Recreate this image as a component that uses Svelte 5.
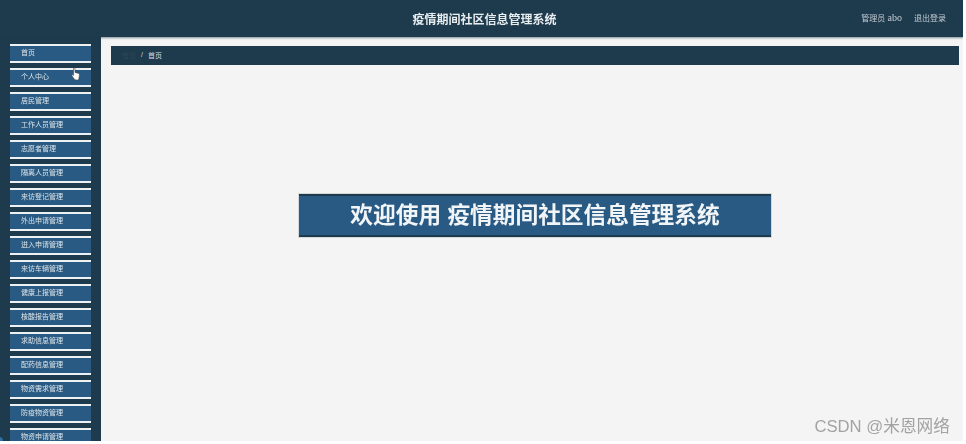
<script>
  const menu = [
    '首页', '个人中心', '居民管理', '工作人员管理', '志愿者管理', '隔离人员管理',
    '来访登记管理', '外出申请管理', '进入申请管理', '来访车辆管理', '健康上报管理',
    '核酸报告管理', '求助信息管理', '配药信息管理', '物资需求管理', '防疫物资管理', '物资申请管理'
  ];
</script>

<div class="page">
  <header class="topbar">
    <h1>疫情期间社区信息管理系统</h1>
    <div class="user">
      <span>管理员 <span class="name">abo</span></span>
      <span>退出登录</span>
    </div>
  </header>
  <div class="body">
    <nav class="sidebar">
      {#each menu as item}
        <div class="item">{item}</div>
      {/each}
    </nav>
    <main class="content">
      <div class="crumb">
        <span class="home">首页</span>
        <span class="sep">/</span>
        <span>首页</span>
      </div>
      <div class="center">
        <div class="welcome">欢迎使用 疫情期间社区信息管理系统</div>
      </div>
    </main>
  </div>
  <svg class="cursor" width="10" height="14" viewBox="0 0 10 14">
    <path d="M2.500 1.200c.8-.5 1.500 0 1.500.8v3.500l3 .7c1.200.3 1.500 1 1.400 2l-.4 3c-.1 1-.8 1.800-1.800 1.800H5c-.8 0-1.300-.4-1.700-1L1 9c-.5-.8.3-1.500 1.100-1l.5.4V2c0-.3 0-.6-.1-.8z" fill="#fff" stroke="#444" stroke-width=".6"/>
  </svg>
  <span class="dot"></span>
  <div class="mark">CSDN @米恩网络</div>
</div>

<style>
  :global(body) {
    background: #fff;
  }

  .page {
    position: relative;
    width: 963px;
    height: 441px;
    overflow: hidden;
    display: flex;
    flex-direction: column;
    background: #1e3a4d;
    font-family: "Liberation Sans", "Noto Sans CJK SC", sans-serif;
  }

  .topbar {
    position: relative;
    z-index: 1;
    flex: 0 0 37px;
    display: flex;
    align-items: center;
    justify-content: center;
    padding-left: 6px;
    background: #1e3a4d;
    box-shadow: 0 1px 2px rgba(30, 58, 77, 0.55);
  }

  .topbar h1 {
    margin: 0;
    font-size: 12px;
    font-weight: 700;
    color: #e8edf0;
    filter: blur(0.35px);
  }

  .user {
    position: absolute;
    right: 17px;
    top: 12px;
    display: flex;
    gap: 12px;
    font-size: 8px;
    color: #c3ccd2;
    filter: blur(0.35px);
  }

  .name {
    font-family: "Liberation Serif", serif;
    font-size: 10px;
  }

  .body {
    flex: 1;
    display: flex;
    min-height: 0;
  }

  .sidebar {
    flex: 0 0 101px;
    box-sizing: border-box;
    padding: 7px 10px 0;
    display: flex;
    flex-direction: column;
    gap: 5px;
    overflow: hidden;
  }

  .item {
    flex: 0 0 19px;
    box-sizing: border-box;
    padding-left: 11px;
    line-height: 14px;
    font-size: 7px;
    color: #dde4e9;
    background: #285a83;
    border-top: 2px solid #eef1f3;
    border-bottom: 2px solid #eef1f3;
    filter: blur(0.3px);
  }

  .content {
    flex: 1;
    display: flex;
    flex-direction: column;
    background: #f4f4f4;
    padding: 9px 4px 0 10px;
  }

  .crumb {
    flex: 0 0 19px;
    display: flex;
    align-items: center;
    gap: 5px;
    padding: 0 0 2px 11px;
    box-sizing: border-box;
    font-size: 7px;
    color: #d5dde3;
    background: #1e3a4d;
  }

  .home {
    color: #2c4657;
  }

  .center {
    flex: 1;
    display: flex;
    justify-content: center;
    padding-top: 129px;
  }

  .welcome {
    box-sizing: border-box;
    width: 472px;
    height: 43px;
    text-align: center;
    line-height: 39px;
    font-size: 22.7px;
    font-weight: 700;
    color: #f2f5f7;
    background: #285a83;
    border-top: 2px solid #1e3a4d;
    border-bottom: 2px solid #1e3a4d;
    box-shadow: 0 0 0 1px rgba(120, 130, 140, 0.25);
    filter: blur(0.3px);
  }

  .cursor {
    position: absolute;
    left: 71px;
    top: 67px;
  }

  .dot {
    position: absolute;
    left: -5px;
    bottom: -4px;
    width: 8px;
    height: 8px;
    border-radius: 50%;
    background: #2f6fa8;
  }

  .mark {
    position: absolute;
    right: 13px;
    bottom: 4px;
    font-size: 16.7px;
    color: #a3a3a3;
    filter: blur(0.3px);
  }
</style>
